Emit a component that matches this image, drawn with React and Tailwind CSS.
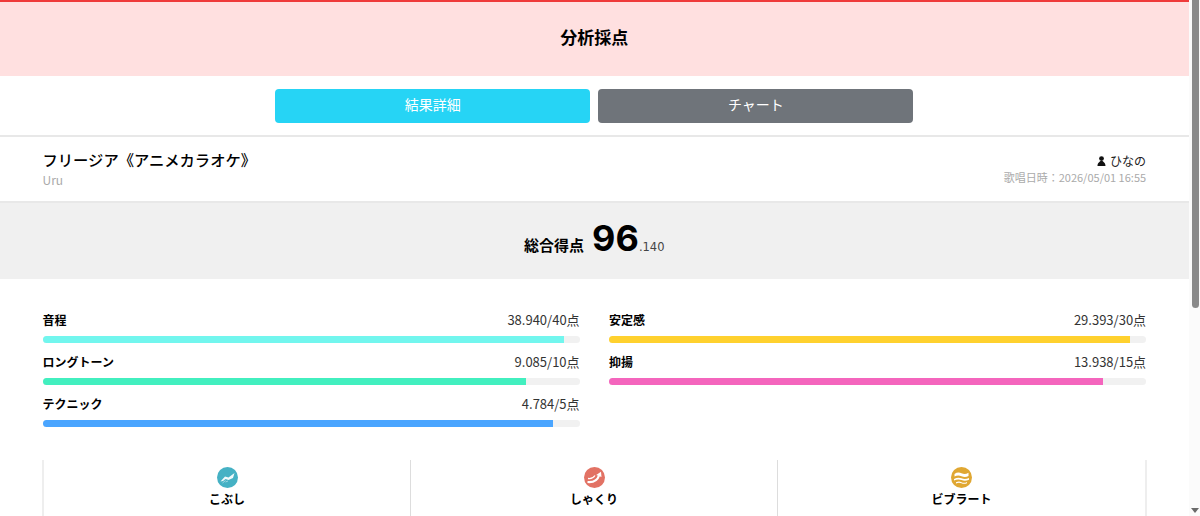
import React from "react";

const jp = "font-['Noto_Sans_CJK_JP','Noto_Sans',sans-serif]";

const leftBars = [
  { name: "音程", score: "38.940/40点", pct: "97.1%", color: "bg-[#72f6ee]" },
  { name: "ロングトーン", score: "9.085/10点", pct: "90.06%", color: "bg-[#42efbf]" },
  { name: "テクニック", score: "4.784/5点", pct: "95.05%", color: "bg-[#4aa5ff]" },
];
const rightBars = [
  { name: "安定感", score: "29.393/30点", pct: "97%", color: "bg-[#ffd12e]" },
  { name: "抑揚", score: "13.938/15点", pct: "92%", color: "bg-[#f465bd]" },
];

const ScoreBar = ({ name, score, pct, color }) => (
  <div className="h-[42px]">
    <div className="flex items-center justify-between h-[22px]">
      <p className="text-xs font-bold text-black">{name}</p>
      <p className="text-[13px] text-[#333]">{score}</p>
    </div>
    <div className="h-[7px] mt-[5px] rounded-full bg-[#f1f1f1] overflow-hidden">
      <div className={`h-full ${color}`} style={{ width: pct }}></div>
    </div>
  </div>
);

const KobushiIcon = () => (
  <svg width="21" height="21" viewBox="0 0 21 21">
    <circle cx="10.5" cy="10.5" r="10.5" fill="#45b1c4" />
    <path d="M3.5 14.5 L8 9.5 L11.5 10.5 L17.5 6 L16 11 L11.5 13 L8.5 12 L6 14 Z" fill="#fff" opacity="0.92" />
    <path d="M5.5 16 L8.5 13.5 M8.5 15 L11 14" stroke="#fff" strokeWidth="0.8" opacity="0.6" />
  </svg>
);

const ShakuriIcon = () => (
  <svg width="21" height="21" viewBox="0 0 21 21">
    <circle cx="10.5" cy="10.5" r="10.5" fill="#e27264" />
    <path d="M3.5 15 C9 15.5 13.5 13.5 15 8.5" fill="none" stroke="#fff" strokeWidth="2.2" />
    <path d="M4 11.5 C7 12 9.5 10.8 11 8.5" fill="none" stroke="#fff" strokeWidth="1.3" />
    <path d="M12.2 8 L17 4.8 L17.5 10 Z" fill="#fff" />
  </svg>
);

const VibratoIcon = () => (
  <svg width="21" height="21" viewBox="0 0 21 21">
    <circle cx="10.5" cy="10.5" r="10.5" fill="#e0a732" />
    <path d="M3.5 7 Q7 4.5 10.5 6.3 T17.5 5.8 V9 Q14 10.8 10.5 9.2 T3.5 9.5 Z" fill="#fff" />
    <path d="M3 12 Q7 9.8 10.5 11.3 T18 11 V12.8 Q14 14.5 10.5 13 T3 13.6 Z" fill="#fff" />
    <path d="M5 15.3 Q8 13.8 10.5 15.2 T16 15 V16.2 Q13 17.4 10.5 16.3 T5 16.4 Z" fill="#fff" />
  </svg>
);

const techniques = [
  { label: "こぶし", icon: <KobushiIcon /> },
  { label: "しゃくり", icon: <ShakuriIcon /> },
  { label: "ビブラート", icon: <VibratoIcon /> },
];

export default function App() {
  return (
    <div className={`flex h-[516px] w-[1200px] overflow-hidden bg-white ${jp}`}>
      <main className="w-[1188.6px] shrink-0">
        {/* header */}
        <div className="h-[76px] border-t-2 border-[#ef3a3a] bg-[#ffe0e0] flex items-center justify-center pb-[4px]">
          <h1 className="text-[17px] font-bold text-black">分析採点</h1>
        </div>

        {/* tabs */}
        <div className="h-[61px] pt-[13px] flex justify-center gap-[8.4px] border-b-2 border-[#e8e8e8]">
          <button className="w-[314.9px] h-[34px] pb-[5px] rounded bg-[#26d4f5] text-sm text-white">結果詳細</button>
          <button className="w-[314.9px] h-[34px] pb-[5px] rounded bg-[#6f747a] text-sm text-white">チャート</button>
        </div>

        {/* song info */}
        <div className="h-[66px] px-[42.5px] flex justify-between border-b-2 border-[#e8e8e8]">
          <div className="pt-[11px]">
            <p className="text-[15.3px] leading-[22px] font-medium text-black">フリージア《アニメカラオケ》</p>
            <p className="text-xs leading-[20px] text-[#aaa]">Uru</p>
          </div>
          <div className="pt-[15px] text-right">
            <p className="flex items-center justify-end gap-1 text-xs leading-[17px] text-[#222]">
              <svg width="9" height="10" viewBox="0 0 9 10" fill="#111">
                <circle cx="4.5" cy="2.6" r="2.4" />
                <path d="M0.5 10 C0.5 6.8 2.5 6 3.5 5 H5.5 C6.5 6 8.5 6.8 8.5 10 Z" />
              </svg>
              ひなの
            </p>
            <p className="text-[11px] leading-[16px] text-[#aaa]">歌唱日時：2026/05/01 16:55</p>
          </div>
        </div>

        {/* total score */}
        <div className="h-[76px] bg-[#f0f0f0] flex items-baseline justify-center pt-[5px]">
          <span className="text-[15px] font-bold text-black mr-[8px]">総合得点</span>
          <span className="text-[36px] font-bold text-black leading-[60px] font-['Inter',sans-serif]">96</span>
          <span className="text-[11.5px] text-[#444] font-['DejaVu_Sans',sans-serif]">.140</span>
        </div>

        {/* score bars */}
        <div className="grid grid-cols-2 gap-x-[29.4px] px-[42.5px] pt-[30px] h-[181px]">
          <div>
            {leftBars.map((b) => (
              <ScoreBar key={b.name} {...b} />
            ))}
          </div>
          <div>
            {rightBars.map((b) => (
              <ScoreBar key={b.name} {...b} />
            ))}
          </div>
        </div>

        {/* techniques */}
        <div className="grid grid-cols-3 ml-[42px] mr-[41.6px] h-[60px] border-x-2 border-[#eeeeee]">
          {techniques.map((t, i) => (
            <div
              key={t.label}
              className={i < 2 ? "flex flex-col items-center pt-[7px] border-r border-[#dddddd]" : "flex flex-col items-center pt-[7px]"}
            >
              {t.icon}
              <p className="text-xs leading-[20px] mt-[1px] font-bold text-black">{t.label}</p>
            </div>
          ))}
        </div>
      </main>

      {/* scrollbar */}
      <aside className="flex-1 flex flex-col items-end justify-between bg-[#fbfbfb] pr-[1px] pb-[3px]">
        <div className="w-[7.5px] h-[308px] rounded-b bg-[#8a8a8a]"></div>
        <div className="w-0 h-0 border-x-4 border-x-transparent border-t-[5px] border-t-[#6a6a6a]"></div>
      </aside>
    </div>
  );
}
